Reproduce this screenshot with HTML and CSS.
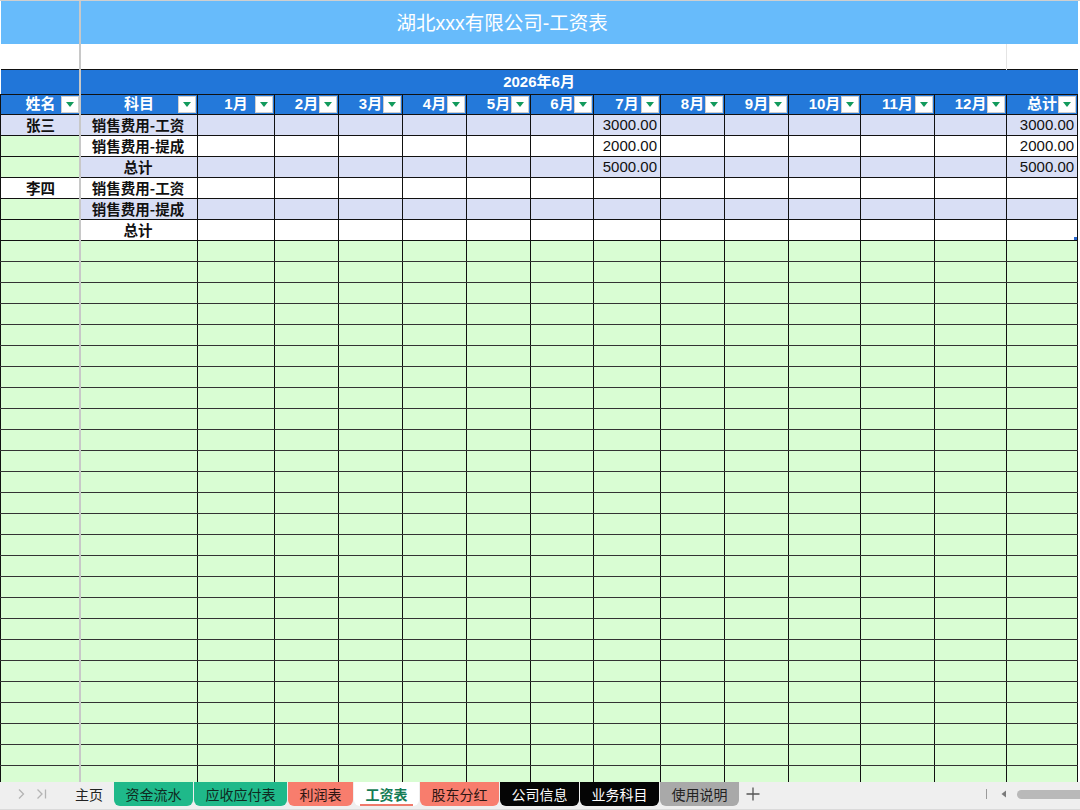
FILE: index.html
```html
<!DOCTYPE html>
<html lang="zh-CN">
<head>
<meta charset="utf-8">
<title>工资表</title>
<link rel="stylesheet" href="styles.css">
</head>
<body>
<div class="app">
  <div class="sheet">
    <table class="grid">
      <colgroup>
        <col style="width:80px"><col style="width:117px"><col style="width:77px"><col style="width:64px"><col style="width:64px"><col style="width:64px"><col style="width:64px"><col style="width:63px"><col style="width:67px"><col style="width:64px"><col style="width:64px"><col style="width:72px"><col style="width:74px"><col style="width:72px"><col style="width:71px">
      </colgroup>
      <tr class="r-title"><td colspan="14" class="title">湖北xxx有限公司-工资表</td><td></td></tr>
      <tr class="r-gap"><td colspan="14"></td><td class="gap-end"></td></tr>
      <tr class="r-period"><td colspan="15">2026年6月</td></tr>
      <tr class="r-head">
        <td>姓名<span class="dd"></span></td>
        <td>科目<span class="dd"></span></td>
        <td>1月<span class="dd"></span></td>
        <td>2月<span class="dd"></span></td>
        <td>3月<span class="dd"></span></td>
        <td>4月<span class="dd"></span></td>
        <td>5月<span class="dd"></span></td>
        <td>6月<span class="dd"></span></td>
        <td>7月<span class="dd"></span></td>
        <td>8月<span class="dd"></span></td>
        <td>9月<span class="dd"></span></td>
        <td>10月<span class="dd"></span></td>
        <td>11月<span class="dd"></span></td>
        <td>12月<span class="dd"></span></td>
        <td>总计<span class="dd"></span></td>
      </tr>
      <tr class="row band">
        <td class="name">张三</td><td class="item">销售费用-工资</td><td></td><td></td><td></td><td></td><td></td><td></td><td class="num">3000.00</td><td></td><td></td><td></td><td></td><td></td><td class="num">3000.00</td>
      </tr>
      <tr class="row">
        <td class="name empty"></td><td class="item">销售费用-提成</td><td></td><td></td><td></td><td></td><td></td><td></td><td class="num">2000.00</td><td></td><td></td><td></td><td></td><td></td><td class="num">2000.00</td>
      </tr>
      <tr class="row band">
        <td class="name empty"></td><td class="item">总计</td><td></td><td></td><td></td><td></td><td></td><td></td><td class="num">5000.00</td><td></td><td></td><td></td><td></td><td></td><td class="num">5000.00</td>
      </tr>
      <tr class="row">
        <td class="name">李四</td><td class="item">销售费用-工资</td><td></td><td></td><td></td><td></td><td></td><td></td><td></td><td></td><td></td><td></td><td></td><td></td><td></td>
      </tr>
      <tr class="row band">
        <td class="name empty"></td><td class="item">销售费用-提成</td><td></td><td></td><td></td><td></td><td></td><td></td><td></td><td></td><td></td><td></td><td></td><td></td><td></td>
      </tr>
      <tr class="row">
        <td class="name empty"></td><td class="item">总计</td><td></td><td></td><td></td><td></td><td></td><td></td><td></td><td></td><td></td><td></td><td></td><td></td><td class="table-end"><span class="resize"></span></td>
      </tr>
      <tr class="blank"><td></td><td></td><td></td><td></td><td></td><td></td><td></td><td></td><td></td><td></td><td></td><td></td><td></td><td></td><td></td></tr>
      <tr class="blank"><td></td><td></td><td></td><td></td><td></td><td></td><td></td><td></td><td></td><td></td><td></td><td></td><td></td><td></td><td></td></tr>
      <tr class="blank"><td></td><td></td><td></td><td></td><td></td><td></td><td></td><td></td><td></td><td></td><td></td><td></td><td></td><td></td><td></td></tr>
      <tr class="blank"><td></td><td></td><td></td><td></td><td></td><td></td><td></td><td></td><td></td><td></td><td></td><td></td><td></td><td></td><td></td></tr>
      <tr class="blank"><td></td><td></td><td></td><td></td><td></td><td></td><td></td><td></td><td></td><td></td><td></td><td></td><td></td><td></td><td></td></tr>
      <tr class="blank"><td></td><td></td><td></td><td></td><td></td><td></td><td></td><td></td><td></td><td></td><td></td><td></td><td></td><td></td><td></td></tr>
      <tr class="blank"><td></td><td></td><td></td><td></td><td></td><td></td><td></td><td></td><td></td><td></td><td></td><td></td><td></td><td></td><td></td></tr>
      <tr class="blank"><td></td><td></td><td></td><td></td><td></td><td></td><td></td><td></td><td></td><td></td><td></td><td></td><td></td><td></td><td></td></tr>
      <tr class="blank"><td></td><td></td><td></td><td></td><td></td><td></td><td></td><td></td><td></td><td></td><td></td><td></td><td></td><td></td><td></td></tr>
      <tr class="blank"><td></td><td></td><td></td><td></td><td></td><td></td><td></td><td></td><td></td><td></td><td></td><td></td><td></td><td></td><td></td></tr>
      <tr class="blank"><td></td><td></td><td></td><td></td><td></td><td></td><td></td><td></td><td></td><td></td><td></td><td></td><td></td><td></td><td></td></tr>
      <tr class="blank"><td></td><td></td><td></td><td></td><td></td><td></td><td></td><td></td><td></td><td></td><td></td><td></td><td></td><td></td><td></td></tr>
      <tr class="blank"><td></td><td></td><td></td><td></td><td></td><td></td><td></td><td></td><td></td><td></td><td></td><td></td><td></td><td></td><td></td></tr>
      <tr class="blank"><td></td><td></td><td></td><td></td><td></td><td></td><td></td><td></td><td></td><td></td><td></td><td></td><td></td><td></td><td></td></tr>
      <tr class="blank"><td></td><td></td><td></td><td></td><td></td><td></td><td></td><td></td><td></td><td></td><td></td><td></td><td></td><td></td><td></td></tr>
      <tr class="blank"><td></td><td></td><td></td><td></td><td></td><td></td><td></td><td></td><td></td><td></td><td></td><td></td><td></td><td></td><td></td></tr>
      <tr class="blank"><td></td><td></td><td></td><td></td><td></td><td></td><td></td><td></td><td></td><td></td><td></td><td></td><td></td><td></td><td></td></tr>
      <tr class="blank"><td></td><td></td><td></td><td></td><td></td><td></td><td></td><td></td><td></td><td></td><td></td><td></td><td></td><td></td><td></td></tr>
      <tr class="blank"><td></td><td></td><td></td><td></td><td></td><td></td><td></td><td></td><td></td><td></td><td></td><td></td><td></td><td></td><td></td></tr>
      <tr class="blank"><td></td><td></td><td></td><td></td><td></td><td></td><td></td><td></td><td></td><td></td><td></td><td></td><td></td><td></td><td></td></tr>
      <tr class="blank"><td></td><td></td><td></td><td></td><td></td><td></td><td></td><td></td><td></td><td></td><td></td><td></td><td></td><td></td><td></td></tr>
      <tr class="blank"><td></td><td></td><td></td><td></td><td></td><td></td><td></td><td></td><td></td><td></td><td></td><td></td><td></td><td></td><td></td></tr>
      <tr class="blank"><td></td><td></td><td></td><td></td><td></td><td></td><td></td><td></td><td></td><td></td><td></td><td></td><td></td><td></td><td></td></tr>
      <tr class="blank"><td></td><td></td><td></td><td></td><td></td><td></td><td></td><td></td><td></td><td></td><td></td><td></td><td></td><td></td><td></td></tr>
      <tr class="blank"><td></td><td></td><td></td><td></td><td></td><td></td><td></td><td></td><td></td><td></td><td></td><td></td><td></td><td></td><td></td></tr>
      <tr class="blank"><td></td><td></td><td></td><td></td><td></td><td></td><td></td><td></td><td></td><td></td><td></td><td></td><td></td><td></td><td></td></tr>
      <tr class="blank"><td></td><td></td><td></td><td></td><td></td><td></td><td></td><td></td><td></td><td></td><td></td><td></td><td></td><td></td><td></td></tr>
    </table>
    <div class="freeze"></div>
  </div>

  <div class="tabbar">
    <div class="nav">
      <svg width="8" height="12" viewBox="0 0 8 12"><path d="M2 1.5 L6.5 6 L2 10.5" fill="none" stroke="#b4b4b4" stroke-width="1.3"/></svg>
      <svg width="12" height="12" viewBox="0 0 12 12"><path d="M1.5 1.5 L6 6 L1.5 10.5" fill="none" stroke="#b4b4b4" stroke-width="1.3"/><path d="M9.5 1.5 V10.5" stroke="#b4b4b4" stroke-width="1.3"/></svg>
    </div>
    <div class="home">主页</div>
    <div class="tab green">资金流水</div>
    <div class="tab green">应收应付表</div>
    <div class="tab salmon">利润表</div>
    <div class="tab active">工资表</div>
    <div class="tab salmon">股东分红</div>
    <div class="tab black">公司信息</div>
    <div class="tab black">业务科目</div>
    <div class="tab gray">使用说明</div>
    <div class="add">
      <svg width="14" height="14" viewBox="0 0 14 14"><path d="M7 0.5 V13.5 M0.5 7 H13.5" stroke="#555" stroke-width="1.3"/></svg>
    </div>
    <div class="hscroll">
      <span class="tick"></span>
      <svg width="6" height="8" viewBox="0 0 6 8"><path d="M5 0.5 L0.5 4 L5 7.5 Z" fill="#7a7a7a"/></svg>
      <span class="thumb"></span>
    </div>
  </div>
</div>
</body>
</html>
```

FILE: styles.css
```css
* { box-sizing: border-box; }

body {
  margin: 0;
  width: 1080px;
  height: 810px;
  overflow: hidden;
  background: #fff;
  font-family: "Liberation Sans", "Noto Sans CJK SC", sans-serif;
  color: #111;
}

.app {
  display: flex;
  flex-direction: column;
  height: 810px;
}

/* ---------- worksheet ---------- */
.sheet {
  position: relative;
  flex: 0 0 782px;
  overflow: hidden;
  border-top: 1px solid #cfcfcf;
}

.grid {
  border-collapse: collapse;
  table-layout: fixed;
  width: 1077px;
}

.grid td {
  padding: 0 3px;
  font-size: 15px;
  white-space: nowrap;
  overflow: hidden;
  line-height: 18px;
}

/* title band */
.r-title td {
  height: 43px;
  background: #67bbfb;
}
.r-title .title {
  text-align: center;
  color: #fff;
  font-size: 19.5px;
  font-family: "Liberation Sans", "Noto Sans CJK SC", sans-serif;
  padding-left: 0;
}

.r-gap td {
  height: 25px;
  background: #fff;
}
.r-gap .gap-end { border-left: 1px solid #e4e4e4; }

/* period band */
.r-period td {
  height: 25px;
  background: #2176d9;
  border-top: 1px solid #111;
  color: #fff;
  font-weight: bold;
  text-align: center;
  font-family: "Liberation Sans", "Noto Sans CJK SC", sans-serif;
}

/* column headers with filter buttons */
.r-head td {
  position: relative;
  height: 20px;
  background: #2479da;
  color: #fff;
  font-weight: bold;
  text-align: center;
  border: 1px solid #111;
  padding: 0;
}

.dd {
  position: absolute;
  right: 1px;
  top: 1px;
  width: 18px;
  height: 17px;
  background: #fff;
  border: 1px solid #cfcfcf;
}
.dd::after {
  content: "";
  position: absolute;
  left: 4px;
  top: 5px;
  border-left: 4.5px solid transparent;
  border-right: 4.5px solid transparent;
  border-top: 5px solid #129a5c;
}

/* table body */
.row td {
  height: 21px;
  border: 1px solid #111;
  background: #fff;
}
.row.band td { background: #d9dff5; }
.row .name {
  text-align: center;
  font-weight: bold;
  font-family: "Noto Sans CJK SC", sans-serif;
  font-size: 14.5px;
}
.row .name.empty,
.row.band .name.empty { background: #d9fdd3; }
.row .item {
  text-align: center;
  font-weight: bold;
  font-family: "Noto Sans CJK SC", sans-serif;
  font-size: 14.5px;
  padding-left: 0;
  padding-right: 2px;
}
.row .num {
  text-align: right;
  padding-right: 3px;
}
.table-end { position: relative; }
.resize {
  position: absolute;
  right: 0;
  bottom: 0;
  width: 3px;
  height: 3px;
  background: #2a68cc;
}

/* empty sheet rows */
.blank td {
  height: 21px;
  background: #d9fdd3;
  border-left: 1px solid #111;
  border-right: 1px solid #111;
  border-top: 1px solid #333;
  border-bottom: 1px solid #333;
}

/* frozen pane divider */
.freeze {
  position: absolute;
  left: 79px;
  top: 0;
  bottom: 0;
  width: 2px;
  background: #c8c8c8;
}

/* ---------- sheet tabs ---------- */
.tabbar {
  flex: 1;
  display: flex;
  align-items: flex-start;
  background: #efefef;
  border-bottom: 1px solid #dadada;
  font-family: "Noto Sans CJK SC", sans-serif;
  font-size: 14px;
}

.nav {
  width: 75px;
  height: 24px;
  display: flex;
  align-items: center;
  gap: 11px;
  padding-left: 17px;
}

.home {
  width: 39px;
  height: 24px;
  line-height: 24px;
  color: #222;
}

.tab {
  height: 24px;
  line-height: 24px;
  padding: 0 11.5px;
  margin-right: 1px;
  border-radius: 0 0 6px 6px;
  color: #1e2a25;
}
.tab.green { background: #1fb98a; color: #0f2a20; }
.tab.salmon { background: #f87d6d; color: #2d1512; }
.tab.black { background: #050505; color: #fff; }
.tab.gray { background: #a9a9a9; color: #222; }
.tab.active {
  position: relative;
  background: #fff;
  color: #157c55;
  font-weight: bold;
}
.tab.active::after {
  content: "";
  position: absolute;
  left: 6px;
  right: 6px;
  bottom: 0;
  height: 2px;
  background: #f07a6b;
}

.add {
  height: 24px;
  display: flex;
  align-items: center;
  padding-left: 6px;
}

.hscroll {
  margin-left: auto;
  height: 24px;
  display: flex;
  align-items: center;
  gap: 10px;
  margin-right: -20px;
}
.hscroll .tick {
  width: 1px;
  height: 10px;
  background: #9a9a9a;
  margin-right: 4px;
}
.hscroll .thumb {
  width: 83px;
  height: 9px;
  border-radius: 5px;
  background: #b9b9b9;
}
```
